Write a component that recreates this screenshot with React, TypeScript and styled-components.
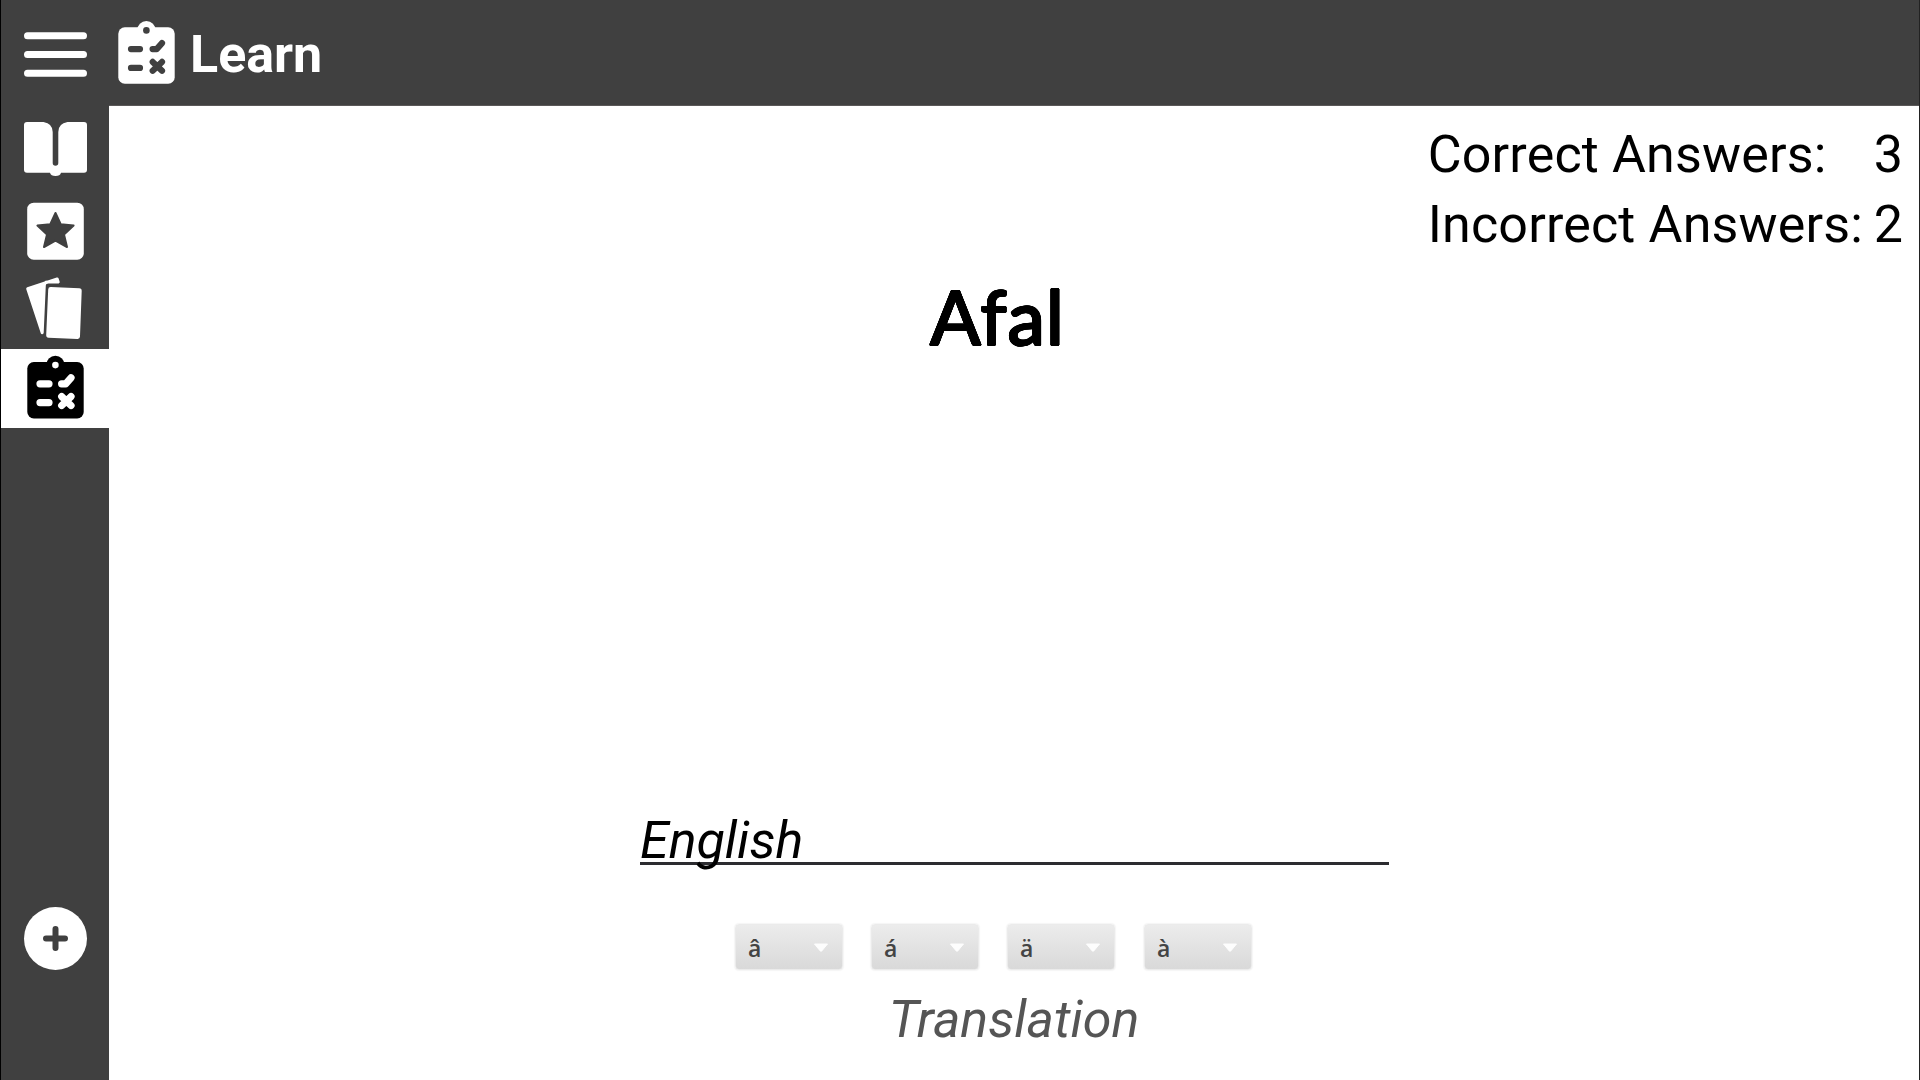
import React from "react";
import styled, { createGlobalStyle } from "styled-components";

const DARK = "#404040";

/* Thickens glyphs evenly in all directions, which also rounds their corners. */
const roundedWeight = (radius: number) =>
  Array.from({ length: 16 }, (_, i) => {
    const angle = (i / 16) * Math.PI * 2;
    return `${(Math.cos(angle) * radius).toFixed(2)}px ${(Math.sin(angle) * radius).toFixed(2)}px 0 #000`;
  }).join(", ");

const GlobalStyle = createGlobalStyle`
  * { box-sizing: border-box; }
  html, body { margin: 0; padding: 0; background: #fff; }
  body { font-family: Roboto, "Liberation Sans", sans-serif; color: #000; }
`;

const Window = styled.div`
  display: flex;
  width: 1920px;
  height: 1080px;
  overflow: hidden;
  background: #fff;
  border-left: 1px solid #000;
  border-right: 1px solid #222;
`;

const Sidebar = styled.nav`
  display: flex;
  flex-direction: column;
  width: 108px;
  flex: none;
  background: ${DARK};
`;

const Tile = styled.button<{ $height: number; $active?: boolean }>`
  display: block;
  width: 108px;
  height: ${(p) => p.$height}px;
  flex: none;
  padding: 0;
  border: 0;
  background: ${(p) => (p.$active ? "#fff" : "transparent")};
  color: ${(p) => (p.$active ? "#000" : "#fff")};
  svg { display: block; }
`;

const Spacer = styled.div`
  flex: 1;
`;

const SidebarFooter = styled.div`
  height: 181px;
`;

const Main = styled.main`
  display: flex;
  flex-direction: column;
  flex: 1;
`;

const Header = styled.header`
  display: flex;
  align-items: center;
  height: 106px;
  flex: none;
  padding-left: 8px;
  background: ${DARK};
  border-bottom: 1px solid #5a5858;
  color: #fff;
`;

const Title = styled.h1`
  margin: 0 0 0 15px;
  padding-top: 4px;
  font-size: 52px;
  line-height: 70px;
  font-weight: 700;
`;

const Scores = styled.dl`
  display: grid;
  grid-template-columns: 446px auto;
  align-self: flex-end;
  margin: 14px 16px 0 0;
  font-size: 52px;
  line-height: 70px;
`;

const ScoreLabel = styled.dt`
  letter-spacing: 0.16px;
  white-space: nowrap;
`;

const ScoreValue = styled.dd`
  margin: 0;
`;

const Word = styled.h2`
  width: 1777px;
  margin: 11px 0 0;
  font-family: Lato, "Open Sans", sans-serif;
  font-size: 75px;
  line-height: 90px;
  font-weight: 400;
  letter-spacing: 1.2px;
  text-align: center;
  text-shadow: ${roundedWeight(1.1)};
`;

const Answer = styled.section`
  display: flex;
  flex-direction: column;
  align-items: center;
  width: 749px;
  margin: 445px 0 0 531px;
`;

const Field = styled.div`
  width: 749px;
  height: 59px;
  border-bottom: 3px solid #2c2c30;
  font-size: 52px;
  line-height: 70px;
  font-style: italic;
  white-space: nowrap;
`;

const Accents = styled.div`
  display: flex;
  gap: 28px;
  margin: 59px 42px 0 0;
`;

const AccentButton = styled.button`
  display: flex;
  align-items: center;
  justify-content: space-between;
  width: 108px;
  height: 46px;
  padding: 1px 12px 0 12px;
  border: 1px solid #ebebeb;
  border-radius: 4px;
  background: linear-gradient(#ececec, #d9d9d9);
  box-shadow: 0 0 2px #dcdcdc;
  font-family: "Open Sans", "Noto Sans", sans-serif;
  font-size: 23px;
  line-height: 40px;
  font-weight: 600;
  color: #444;
  &:last-child { margin-left: 1px; }
`;

const Caption = styled.p`
  margin: 15px 0 0 -1px;
  font-size: 52px;
  line-height: 70px;
  font-style: italic;
  color: #555;
`;

const MenuIcon = () => (
  <svg width="108" height="112" viewBox="1 0 108 112" stroke="currentColor" strokeWidth="7" strokeLinecap="round">
    <path d="M27.5 35.7H83.5M27.5 54.5H83.5M27.5 73.2H83.5" />
  </svg>
);

const BookIcon = () => (
  <svg width="108" height="79" viewBox="1 112 108 79" fill="currentColor">
    <path d="M27 122H43.5Q52.7 123.5 52.7 132V163A2.8 2.8 0 0 0 58.3 163V132Q58.3 123.5 67.5 122H84Q87 122 87 125V169.7Q87 172.7 84 172.7H61A5.6 4 0 0 1 50 172.7H27Q24 172.7 24 169.7V125Q24 122 27 122Z" />
  </svg>
);

const StarIcon = () => (
  <svg width="108" height="79" viewBox="1 191 108 79">
    <rect x="27.2" y="202.7" width="56.6" height="57" rx="6.5" fill="currentColor" />
    <path
      d="M55.5 213L60.7 224.2L73.6 225.6L64 234.4L67 247L55.5 240.7L44 247L47 234.4L37.4 225.6L50.3 224.2Z"
      fill={DARK}
      stroke={DARK}
      strokeWidth="2"
      strokeLinejoin="round"
    />
  </svg>
);

const CardsIcon = () => (
  <svg width="108" height="79" viewBox="1 270 108 79" fill="currentColor" stroke="currentColor" strokeLinejoin="round">
    <path strokeWidth="5" d="M50.7 289.6L79.2 290.8L77.5 336.5L48.7 335.2Z" />
    <path strokeWidth="3" d="M27.7 288.7L57.2 279L58.2 282H47.5Q44.5 282 44.3 285.5L42.2 332.8Z" />
  </svg>
);

/* Quiz clipboard, drawn on a 57 x 63 grid; `ink` is the colour of the marks on it. */
const Clipboard = ({ ink, weight }: { ink: string; weight: number }) => (
  <>
    <rect x="0.3" y="6.5" width="56.4" height="56.4" rx="6.5" fill="currentColor" />
    <circle cx="28.4" cy="9.4" r="9.2" fill="currentColor" />
    <circle cx="28.4" cy="9.6" r="3.3" fill={ink} />
    <path
      d="M13 28.3H22M13 47.1H22M34.6 28.3H38.7L44 22.3M34.7 41.1L44 50M44 41.1L34.7 50"
      fill="none"
      stroke={ink}
      strokeWidth={weight}
      strokeLinecap="round"
      strokeLinejoin="round"
    />
  </>
);

const QuizTileIcon = () => (
  <svg width="108" height="79" viewBox="-26 -6.5 108 79">
    <Clipboard ink="#fff" weight={7.2} />
  </svg>
);

const QuizTitleIcon = () => (
  <svg width="58" height="64" viewBox="-1 0.2 58 64">
    <Clipboard ink={DARK} weight={6.2} />
  </svg>
);

const PlusIcon = () => (
  <svg width="108" height="79" viewBox="1 899 108 79">
    <circle cx="55.5" cy="938.5" r="31.5" fill="currentColor" />
    <path d="M46 938.5H65M55.5 929V948" stroke={DARK} strokeWidth="6" strokeLinecap="round" />
  </svg>
);

const Caret = () => (
  <svg width="18" height="12" viewBox="0 0 18 12">
    <path d="M2.500 2H15.500L9.800 8.900Q9 9.700 8.200 8.900Z" fill="#fdfdfd" stroke="#fdfdfd" strokeLinejoin="round" />
  </svg>
);

const scores = [
  { label: "Correct Answers:", value: 3 },
  { label: "Incorrect Answers:", value: 2 },
];

export default function App() {
  return (
    <>
      <GlobalStyle />
      <Window>
        <Sidebar>
          <Tile $height={112}><MenuIcon /></Tile>
          <Tile $height={79}><BookIcon /></Tile>
          <Tile $height={79}><StarIcon /></Tile>
          <Tile $height={79}><CardsIcon /></Tile>
          <Tile $height={79} $active><QuizTileIcon /></Tile>
          <Spacer />
          <SidebarFooter>
            <Tile $height={79}><PlusIcon /></Tile>
          </SidebarFooter>
        </Sidebar>
        <Main>
          <Header>
            <QuizTitleIcon />
            <Title>Learn</Title>
          </Header>
          <Scores>
            {scores.map((s) => (
              <React.Fragment key={s.label}>
                <ScoreLabel>{s.label}</ScoreLabel>
                <ScoreValue>{s.value}</ScoreValue>
              </React.Fragment>
            ))}
          </Scores>
          <Word>Afal</Word>
          <Answer>
            <Field>English</Field>
            <Accents>
              {["â", "á", "ä", "à"].map((c) => (
                <AccentButton key={c}>
                  {c}
                  <Caret />
                </AccentButton>
              ))}
            </Accents>
            <Caption>Translation</Caption>
          </Answer>
        </Main>
      </Window>
    </>
  );
}
